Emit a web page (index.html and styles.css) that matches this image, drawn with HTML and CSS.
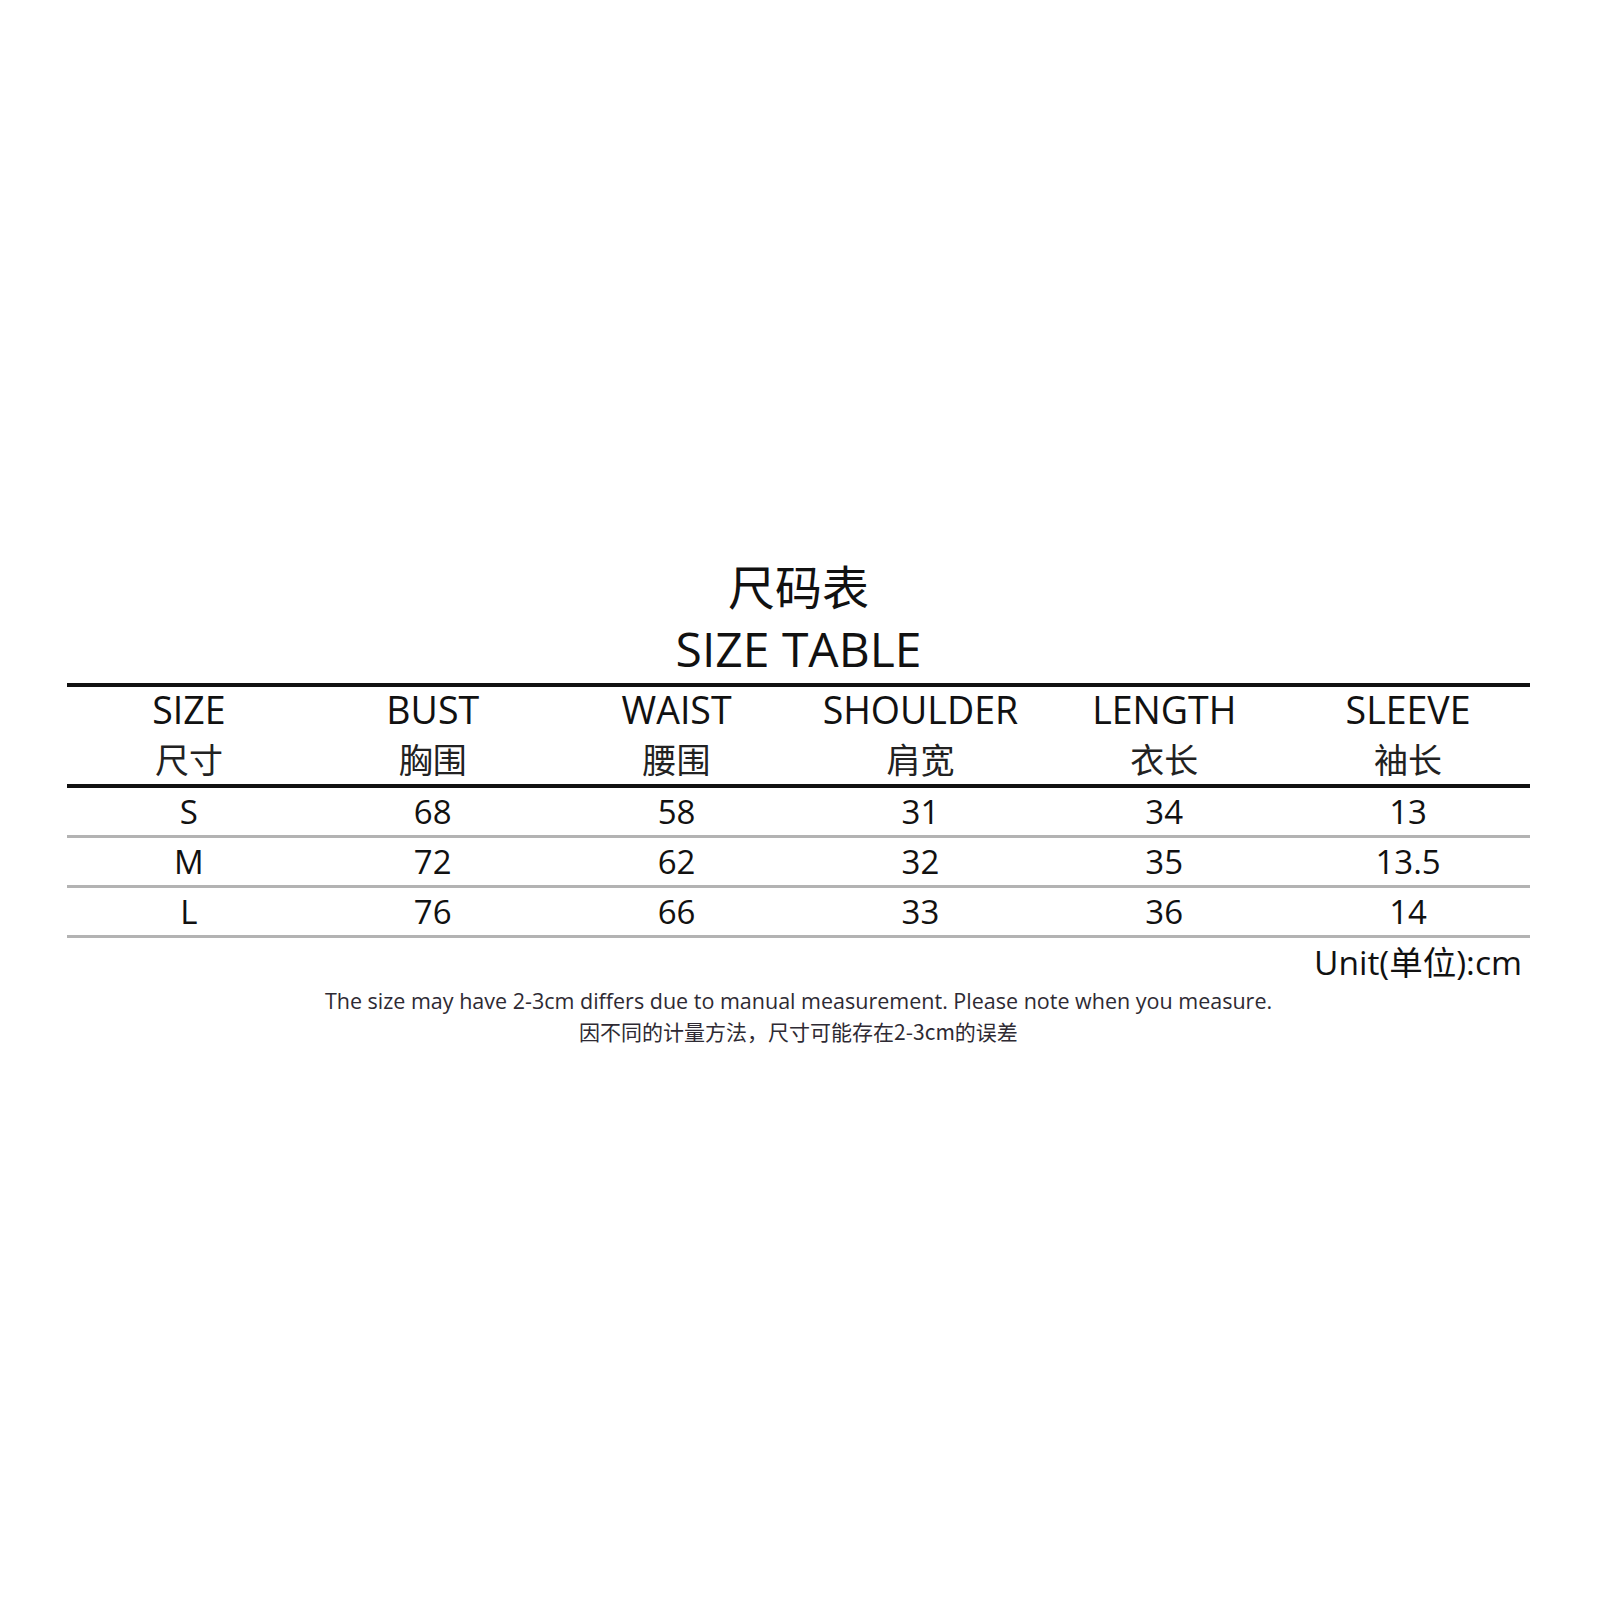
FILE: index.html
```html
<!DOCTYPE html>
<html lang="zh">
<head>
<meta charset="utf-8">
<title>尺码表 SIZE TABLE</title>
<link rel="stylesheet" href="styles.css">
</head>
<body>
<main class="page">
  <h1 class="title-cn">尺码表</h1>
  <h2 class="title-en">SIZE TABLE</h2>
  <div class="table">
    <div class="row head">
      <div class="cell"><span class="en">SIZE</span><span class="cn">尺寸</span></div>
      <div class="cell"><span class="en">BUST</span><span class="cn">胸围</span></div>
      <div class="cell"><span class="en">WAIST</span><span class="cn">腰围</span></div>
      <div class="cell"><span class="en">SHOULDER</span><span class="cn">肩宽</span></div>
      <div class="cell"><span class="en">LENGTH</span><span class="cn">衣长</span></div>
      <div class="cell"><span class="en">SLEEVE</span><span class="cn">袖长</span></div>
    </div>
    <div class="row data">
      <div class="cell">S</div><div class="cell">68</div><div class="cell">58</div><div class="cell">31</div><div class="cell">34</div><div class="cell">13</div>
    </div>
    <div class="row data">
      <div class="cell">M</div><div class="cell">72</div><div class="cell">62</div><div class="cell">32</div><div class="cell">35</div><div class="cell">13.5</div>
    </div>
    <div class="row data">
      <div class="cell">L</div><div class="cell">76</div><div class="cell">66</div><div class="cell">33</div><div class="cell">36</div><div class="cell">14</div>
    </div>
  </div>
  <p class="unit">Unit(单位):cm</p>
  <p class="note-en">The size may have 2-3cm differs due to manual measurement. Please note when you measure.</p>
  <p class="note-cn">因不同的计量方法，尺寸可能存在2-3cm的误差</p>
</main>
</body>
</html>
```
FILE: styles.css
```css
html, body {
  margin: 0;
  padding: 0;
  background: #ffffff;
}
body {
  font-family: "Open Sans", "Noto Sans CJK SC", sans-serif;
  color: #111111;
  width: 1600px;
  height: 1600px;
}
.page {
  padding: 556px 70px 0 67px;
  display: flex;
  flex-direction: column;
  align-items: center;
}
.title-cn {
  margin: 0;
  font-family: "Noto Sans CJK SC", sans-serif;
  font-weight: 400;
  font-size: 47px;
  line-height: 58px;
  height: 58px;
}
.title-en {
  margin: 0;
  font-weight: 400;
  font-size: 48px;
  line-height: 69px;
  height: 69px;
}
.table {
  width: 1463px;
  border-top: 4px solid #111;
}
.row {
  display: grid;
  grid-template-columns: repeat(6, 1fr);
}
.cell {
  text-align: center;
}
.head {
  border-bottom: 4px solid #111;
}
.head .cell {
  display: flex;
  flex-direction: column;
  align-items: center;
}
.en {
  font-size: 37.5px;
  line-height: 46px;
}
.cn {
  font-family: "Noto Sans CJK SC", sans-serif;
  font-size: 34px;
  line-height: 51px;
  color: #222;
}
.data {
  border-bottom: 3px solid #b3b3b3;
  height: 47px;
  align-items: center;
}
.data .cell {
  font-size: 33px;
  line-height: 45px;
}
.unit {
  margin: 2px 8px 2px 0;
  align-self: flex-end;
  font-size: 33.5px;
  line-height: 44px;
}
.note-en {
  margin: 0;
  font-size: 21.5px;
  line-height: 30px;
  color: #2e2a33;
}
.note-cn {
  margin: 0;
  font-family: "Noto Sans CJK SC", sans-serif;
  font-size: 21px;
  line-height: 30px;
  color: #2e2a33;
}
```
